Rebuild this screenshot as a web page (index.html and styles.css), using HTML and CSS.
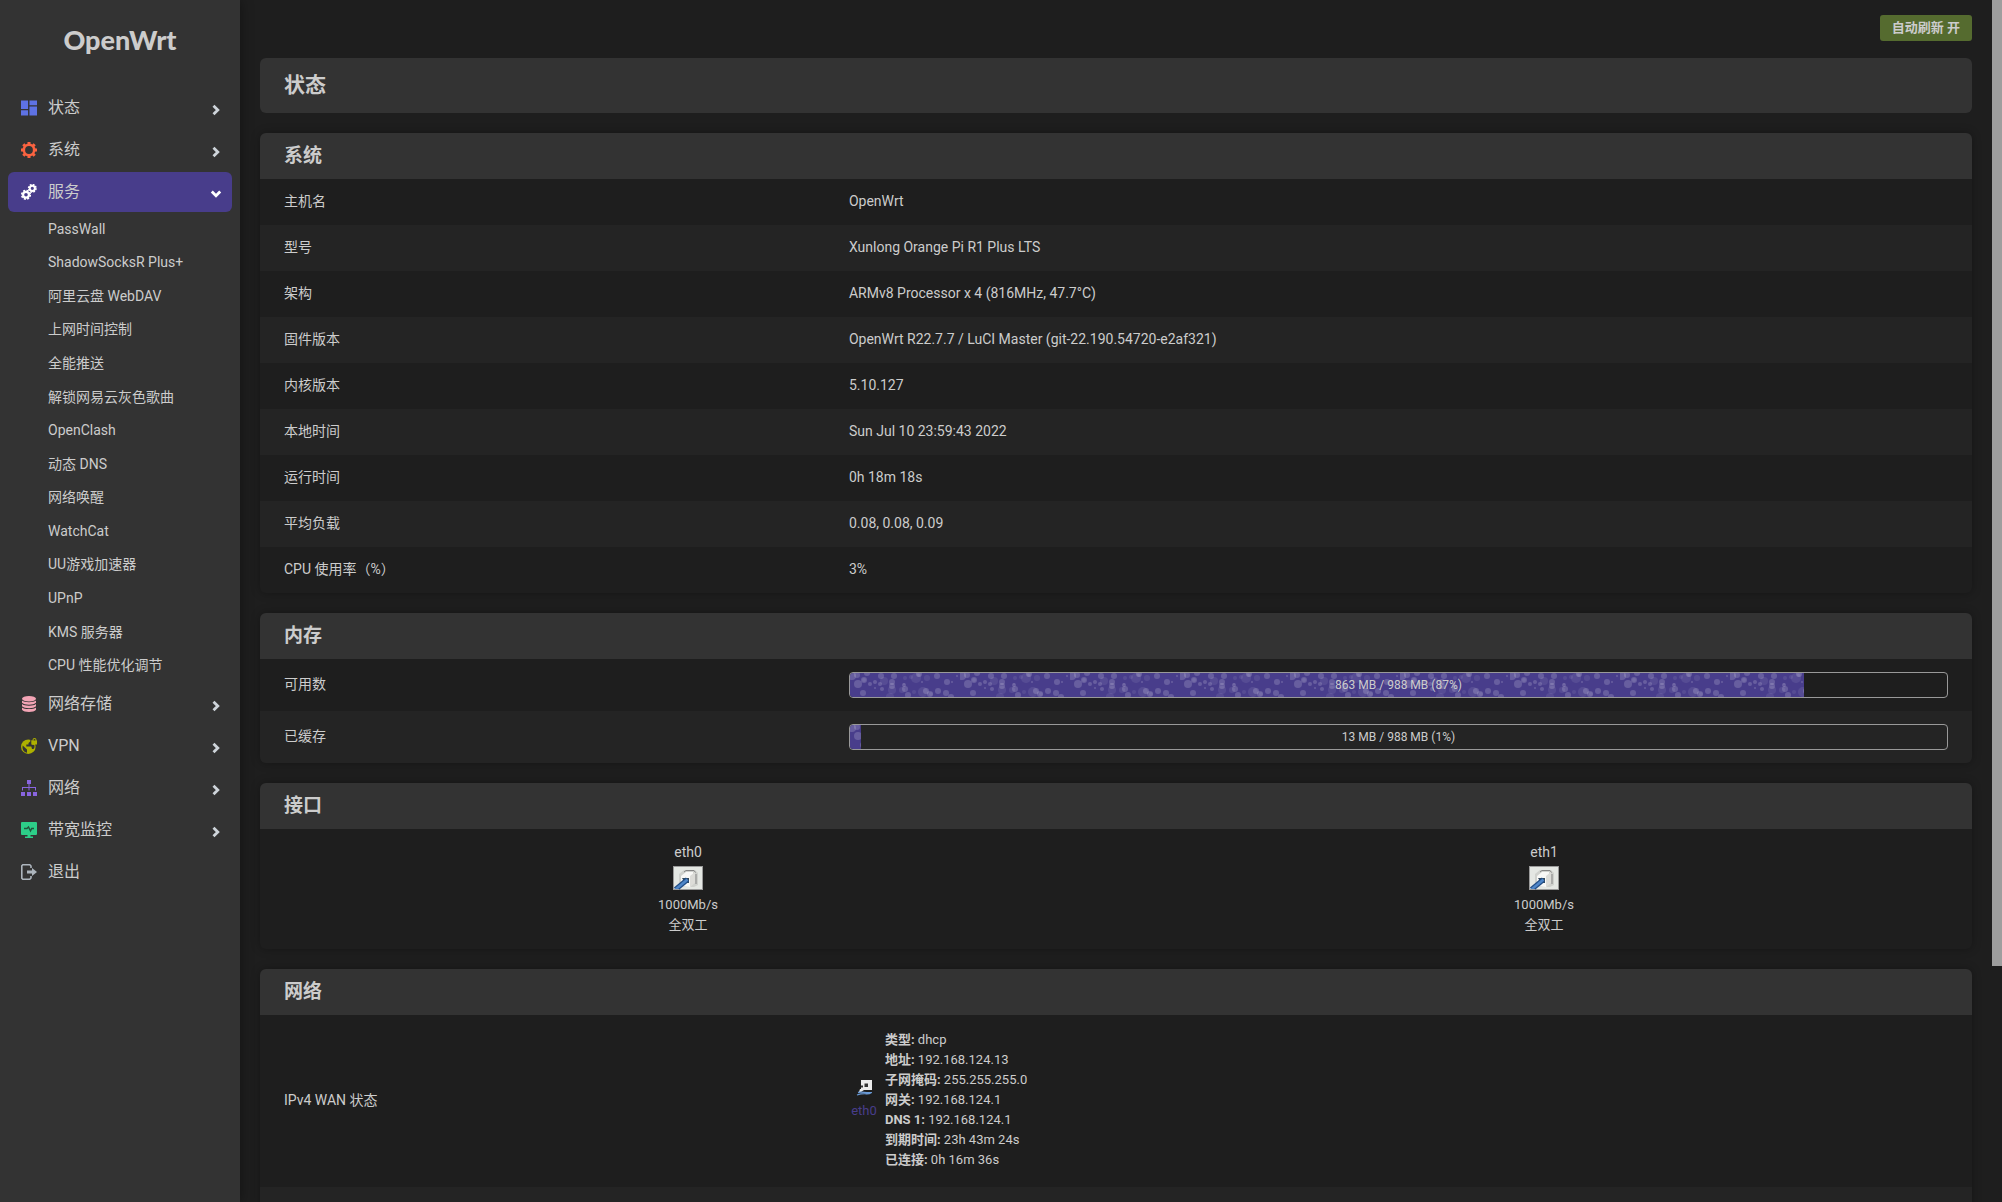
FILE: index.html
```html
<!DOCTYPE html>
<html lang="zh-CN">
<head>
<meta charset="utf-8">
<meta name="viewport" content="width=device-width, initial-scale=1">
<title>OpenWrt - 状态</title>
<link rel="stylesheet" href="styles.css">
</head>
<body>
<svg class="defs" aria-hidden="true">
  <defs>
    <pattern id="bubbles" width="110" height="24" patternUnits="userSpaceOnUse">
      <rect width="110" height="24" fill="#483d8b"/>
      <g fill="#fff" fill-opacity=".17">
        <circle cx="8" cy="11" r="4"/><circle cx="14" cy="7" r="3"/><circle cx="17" cy="0" r="3"/><circle cx="7" cy="2" r="3"/><circle cx="2" cy="3" r="4"/>
        <circle cx="13" cy="20" r="3"/><circle cx="25" cy="9" r="2"/><circle cx="31" cy="3" r="3"/><circle cx="30" cy="11" r="2"/>
        <circle cx="20" cy="11" r="2"/><circle cx="32" cy="16" r="2"/><circle cx="25" cy="15" r="1"/><circle cx="44" cy="3" r="3"/>
        <circle cx="42" cy="9" r="3"/><circle cx="42" cy="13" r="3"/><circle cx="54" cy="12" r="2"/><circle cx="55" cy="16" r="3"/>
        <circle cx="58" cy="22" r="3"/><circle cx="69" cy="1" r="3"/><circle cx="72" cy="9" r="1"/><circle cx="87" cy="3" r="3"/>
        <circle cx="97" cy="9" r="3"/><circle cx="102" cy="9" r="1"/><circle cx="107" cy="3" r="1"/><circle cx="80" cy="21" r="3"/>
        <circle cx="88" cy="18" r="3"/><circle cx="96" cy="20" r="3"/><circle cx="101" cy="24" r="3"/><circle cx="76" cy="18" r="3"/>
      </g>
      <g fill="#fff" fill-opacity=".08">
        <circle cx="14" cy="7" r="2"/><circle cx="34" cy="8" r="4"/><circle cx="42" cy="17" r="4"/><circle cx="55" cy="5" r="2"/><circle cx="61" cy="4" r="2"/>
        <circle cx="52" cy="17" r="3"/><circle cx="66" cy="5" r="5"/><circle cx="77" cy="5" r="3"/><circle cx="64" cy="19" r="2"/>
        <circle cx="73" cy="19" r="5"/><circle cx="40" cy="24" r="4"/><circle cx="69" cy="2" r="2"/><circle cx="81" cy="21" r="2"/><circle cx="54" cy="11" r="1"/>
      </g>
    </pattern>
    <symbol id="chevron" viewBox="0 0 8 12"><path d="M1.5 1.8 5.8 6 1.5 10.2" fill="none" stroke="currentColor" stroke-width="2.8"/></symbol>
    <symbol id="port" viewBox="0 0 30 24">
      <rect x=".5" y=".5" width="29" height="23" fill="#e4e7e3" stroke="#9a9a9a"/>
      <path d="M6 8 11 4h11l3 3v12l-4 2H8l-2-3z" fill="#cfd1cd"/>
      <path d="m8 10 5-4h7v11l-3 4-9-1z" fill="#f8f8f6"/>
      <path d="M17 10l5-4v11l-5 4z" fill="#dcdcd8"/>
      <path d="M11 6l2-1.500h8l1.500 2M23 8v10" fill="none" stroke="#858585"/>
      <path d="M9 12h7v5h-4z" fill="#34495a"/>
      <path d="M14.500 13.500 2.500 23.500" stroke="#234e86" stroke-width="5"/>
      <path d="M14.500 13.500 2.500 23.500" stroke="#4f86c8" stroke-width="2.500"/>
      <path d="M.5 20v3.500H6" fill="none" stroke="#9a9a9a"/>
    </symbol>
  </defs>
</svg>
<div class="shell">
  <aside class="sidebar">
    <a class="brand" href="#">OpenWrt</a>
    <nav>
      <ul class="menu">
        <li><a class="item" href="#">
          <svg class="icon blue" viewBox="0 0 17 16"><path d="M0 0h7.500v9H0zM9 0h8v5H9zM0 10.500h7.500V16H0zM9 6.500h8V16H9z"/></svg>
          <span>状态</span><svg class="arrow"><use href="#chevron"/></svg></a></li>
        <li><a class="item" href="#">
          <svg class="icon orange" viewBox="0 0 16 16"><circle cx="8" cy="8" r="5.200" fill="none" stroke="currentColor" stroke-width="2.600"/><g stroke="currentColor" stroke-width="3"><path d="M8 0v2.200M8 13.800V16M0 8h2.200M13.800 8H16M2.300 2.300l1.600 1.600M12.100 12.100l1.600 1.600M13.700 2.300l-1.600 1.600M3.900 12.100l-1.600 1.600"/></g></svg>
          <span>系统</span><svg class="arrow"><use href="#chevron"/></svg></a></li>
        <li><a class="item active" href="#">
          <svg class="icon" viewBox="0 0 16 16"><g fill="none" stroke="currentColor"><circle cx="5" cy="10.800" r="2.900" stroke-width="2.200"/><circle cx="5" cy="10.800" r="4.300" stroke-width="1.600" stroke-dasharray="2 1.380"/><circle cx="11.300" cy="4.300" r="2.600" stroke-width="2"/><circle cx="11.300" cy="4.300" r="3.800" stroke-width="1.400" stroke-dasharray="1.800 1.180"/></g></svg>
          <span>服务</span><svg class="arrow open"><use href="#chevron"/></svg></a>
          <ul class="submenu">
            <li><a href="#">PassWall</a></li>
            <li><a href="#">ShadowSocksR Plus+</a></li>
            <li><a href="#">阿里云盘 WebDAV</a></li>
            <li><a href="#">上网时间控制</a></li>
            <li><a href="#">全能推送</a></li>
            <li><a href="#">解锁网易云灰色歌曲</a></li>
            <li><a href="#">OpenClash</a></li>
            <li><a href="#">动态 DNS</a></li>
            <li><a href="#">网络唤醒</a></li>
            <li><a href="#">WatchCat</a></li>
            <li><a href="#">UU游戏加速器</a></li>
            <li><a href="#">UPnP</a></li>
            <li><a href="#">KMS 服务器</a></li>
            <li><a href="#">CPU 性能优化调节</a></li>
          </ul>
        </li>
        <li><a class="item" href="#">
          <svg class="icon pink" viewBox="0 0 16 16"><ellipse cx="8" cy="2.800" rx="7" ry="2.800"/><path d="M1 4.600c2 2.200 12 2.200 14 0v2.200c-2 2.600-12 2.600-14 0zM1 8c2 2.200 12 2.200 14 0v2.200c-2 2.600-12 2.600-14 0zM1 11.400c2 2.200 12 2.200 14 0v2.400c-2 2.900-12 2.900-14 0z"/></svg>
          <span>网络存储</span><svg class="arrow"><use href="#chevron"/></svg></a></li>
        <li><a class="item" href="#">
          <svg class="icon olive" viewBox="0 0 16 16"><circle cx="7.300" cy="8.700" r="7.300"/><g fill="#333"><path d="M1.700 7.500 6 11.500v3.200C3.200 14.300 1.300 12 1.500 9zM9.300 1.500v2L7.500 5v1.500H5.300v2h5l.7 2.500h1.500c1.400-1.200 1-3 .8-4l-3-.5V1z"/></g><path d="M11.500 2.500V2a2 2 0 0 1 4 0v.5h.5v4h-5v-4zm1 0h2V2a1 1 0 0 0-2 0z"/></svg>
          <span>VPN</span><svg class="arrow"><use href="#chevron"/></svg></a></li>
        <li><a class="item" href="#">
          <svg class="icon purple" viewBox="0 0 16 16"><path d="M6 0h4v4H6zM0 12h4v4H0zM6 12h4v4H6zM12 12h4v4h-4zM7.500 4h1v3H15v3.500h-1V8H8.500v2.500h-1V8H2v2.500H1V7h6.500z"/></svg>
          <span>网络</span><svg class="arrow"><use href="#chevron"/></svg></a></li>
        <li><a class="item" href="#">
          <svg class="icon green" viewBox="0 0 16 16"><path d="M1 0h14a1 1 0 0 1 1 1v11a1 1 0 0 1-1 1H9.500v1.500H12V16H4v-1.500h2.500V13H1a1 1 0 0 1-1-1V1a1 1 0 0 1 1-1z"/><path d="M3 6.500h3L7.500 5l2 4 1.200-2.500H13" fill="none" stroke="#22543d" stroke-width="1.400"/></svg>
          <span>带宽监控</span><svg class="arrow"><use href="#chevron"/></svg></a></li>
        <li><a class="item" href="#">
          <svg class="icon grey" viewBox="0 0 16 16"><path d="M10 4V2L8.800.8H1.800L.8 1.800v12.400l1 1h7L10 14v-2" fill="none" stroke="currentColor" stroke-width="1.600"/><path d="M6 6.500h5V4l5 4-5 4V9.500H6z"/></svg>
          <span>退出</span></a></li>
      </ul>
    </nav>
  </aside>
  <main class="content">
    <div class="toolbar"><button class="refresh" type="button">自动刷新 开</button></div>
    <h1 class="title">状态</h1>

    <section class="card">
      <h2>系统</h2>
      <table class="info">
        <tr><th scope="row">主机名</th><td>OpenWrt</td></tr>
        <tr><th scope="row">型号</th><td>Xunlong Orange Pi R1 Plus LTS</td></tr>
        <tr><th scope="row">架构</th><td>ARMv8 Processor x 4 (816MHz, 47.7°C)</td></tr>
        <tr><th scope="row">固件版本</th><td>OpenWrt R22.7.7 / LuCI Master (git-22.190.54720-e2af321)</td></tr>
        <tr><th scope="row">内核版本</th><td>5.10.127</td></tr>
        <tr><th scope="row">本地时间</th><td>Sun Jul 10 23:59:43 2022</td></tr>
        <tr><th scope="row">运行时间</th><td>0h 18m 18s</td></tr>
        <tr><th scope="row">平均负载</th><td>0.08, 0.08, 0.09</td></tr>
        <tr><th scope="row">CPU 使用率（%）</th><td>3%</td></tr>
      </table>
    </section>

    <section class="card">
      <h2>内存</h2>
      <table class="info">
        <tr><th scope="row">可用数</th><td><div class="bar"><svg class="fill" style="width:87%"><rect width="100%" height="100%" fill="url(#bubbles)"/></svg><span>863 MB / 988 MB (87%)</span></div></td></tr>
        <tr><th scope="row">已缓存</th><td><div class="bar"><svg class="fill" style="width:1%"><rect width="100%" height="100%" fill="url(#bubbles)"/></svg><span>13 MB / 988 MB (1%)</span></div></td></tr>
      </table>
    </section>

    <section class="card">
      <h2>接口</h2>
      <div class="ports">
        <div class="port"><span class="port-name">eth0</span><svg class="port-icon"><use href="#port"/></svg><span>1000Mb/s</span><span>全双工</span></div>
        <div class="port"><span class="port-name">eth1</span><svg class="port-icon"><use href="#port"/></svg><span>1000Mb/s</span><span>全双工</span></div>
      </div>
    </section>

    <section class="card">
      <h2>网络</h2>
      <table class="info">
        <tr><th scope="row">IPv4 WAN 状态</th><td>
          <div class="wan">
            <div class="wan-if">
              <svg class="wan-icon" viewBox="0 0 16 16"><path d="M5 0h11v10H8l-3 2H3l1-3h1z" fill="#ececec"/><path d="M8.500 3.500h3.500v3.500H8.500z" fill="#333"/><path d="M5 5.500h2v2H5z" fill="#333"/><path d="M2 12.500c4-1 6 .5 13 .2-3 2.500-6-.5-14 2.300" fill="none" stroke="#6a9bd8" stroke-width="1.300"/></svg>
              <a href="#">eth0</a>
            </div>
            <div class="wan-info">
              <div><b>类型:</b> dhcp</div>
              <div><b>地址:</b> 192.168.124.13</div>
              <div><b>子网掩码:</b> 255.255.255.0</div>
              <div><b>网关:</b> 192.168.124.1</div>
              <div><b>DNS 1:</b> 192.168.124.1</div>
              <div><b>到期时间:</b> 23h 43m 24s</div>
              <div><b>已连接:</b> 0h 16m 36s</div>
            </div>
          </div>
        </td></tr>
        <tr><th scope="row"></th><td></td></tr>
      </table>
    </section>
  </main>
  <div class="scrollbar" aria-hidden="true"><div class="thumb"></div></div>
</div>
</body>
</html>
```
FILE: styles.css
```css
* { box-sizing: border-box; }

body {
  margin: 0;
  background: #1e1e1e;
  color: #ccc;
  font: 14px/20px Roboto, "Noto Sans CJK SC", sans-serif;
}

ul { list-style: none; margin: 0; padding: 0; }
a { color: inherit; text-decoration: none; }
.defs { position: absolute; width: 0; height: 0; }

.shell {
  display: grid;
  grid-template-columns: 240px minmax(0, 1fr) 10px;
  grid-template-rows: 100vh;
  overflow: hidden;
}

/* Sidebar */
.sidebar {
  background: #333;
  box-shadow: 0 0 12px rgba(0, 0, 0, .4);
}
.brand {
  display: block;
  padding: 20px 0 28px;
  text-align: center;
  font: 900 27px/40px Lato, sans-serif;
}
.menu {
  display: flex;
  flex-direction: column;
  gap: 2px;
  padding: 0 8px;
}
.item {
  display: flex;
  align-items: center;
  gap: 11px;
  height: 40px;
  padding: 0 12px 0 13px;
  border-radius: 6px;
  font-size: 16px;
}
.item.active { background: #483d8b; }
.icon { width: 16px; height: 16px; fill: currentColor; color: #fff; }
.icon.blue { color: #5e72e4; }
.icon.orange { color: #fb6340; }
.icon.pink { color: #f3a4b5; }
.icon.olive { color: #adb000; }
.icon.purple { color: #8965e0; }
.icon.green { color: #2dce89; }
.icon.grey { color: #adb5bd; }
.arrow { width: 8px; height: 12px; margin: 3px 0 0 auto; color: #ced4da; }
.arrow.open { color: #fff; transform: rotate(90deg); }
.submenu {
  display: grid;
  grid-auto-rows: 1fr;
  align-items: center;
  height: 470px;
  padding-left: 40px;
}

/* Content */
.content {
  display: flex;
  flex-direction: column;
  gap: 20px;
  padding: 15px 20px 0;
  overflow: hidden;
}
.toolbar { display: flex; justify-content: flex-end; margin-bottom: -3px; }
.refresh {
  height: 26px;
  padding: 0 12px;
  border: 0;
  border-radius: 3px;
  background: #556b2f;
  color: #ccc;
  font: 700 13px/20px Roboto, "Noto Sans CJK SC", sans-serif;
}
.title {
  flex: none;
  margin: 0;
  padding: 13px 24px 14px;
  border-radius: 6px;
  background: #333;
  font-size: 21px;
  line-height: 28px;
}
.card {
  flex: none;
  border-radius: 6px;
  overflow: hidden;
  box-shadow: 0 0 10px rgba(0, 0, 0, .3);
}
.card h2 {
  margin: 0;
  padding: 9px 24px;
  background: #333;
  font-size: 19px;
  line-height: 28px;
}
.info { width: 100%; border-collapse: collapse; table-layout: fixed; }
.info th, .info td {
  height: 46px;
  padding: 12px 24px 14px;
  font-weight: 400;
  text-align: left;
}
.info th { width: 33%; }
.info tr:nth-child(even) { background: #242424; }
.info td:has(.bar) { padding: 13px 24px; }

.bar {
  position: relative;
  height: 26px;
  border: 1px solid #999;
  border-radius: 4px;
  overflow: hidden;
  font-size: 12px;
  line-height: 24px;
  text-align: center;
}
.fill { position: absolute; left: 0; top: 0; height: 100%; }
.bar span { position: relative; }

.ports { display: grid; grid-template-columns: 1fr 1fr; }
.port {
  display: flex;
  flex-direction: column;
  align-items: center;
  padding: 13px 0 14px;
  font-size: 13px;
  line-height: 20px;
}
.port-name { font-size: 14px; }
.port-icon { width: 30px; height: 24px; margin: 4px 0 5px; }

.info td:has(.wan) { padding: 15px 24px 17px; }
.wan { display: flex; align-items: center; gap: 6px; font-size: 13px; }
.wan-if {
  display: flex;
  flex-direction: column;
  align-items: center;
  gap: 5px;
  width: 30px;
}
.wan-if a { color: #483d8b; }
.wan-icon { width: 16px; height: 16px; }

.scrollbar .thumb { height: 80.4%; background: #9e9e9e; }
```
